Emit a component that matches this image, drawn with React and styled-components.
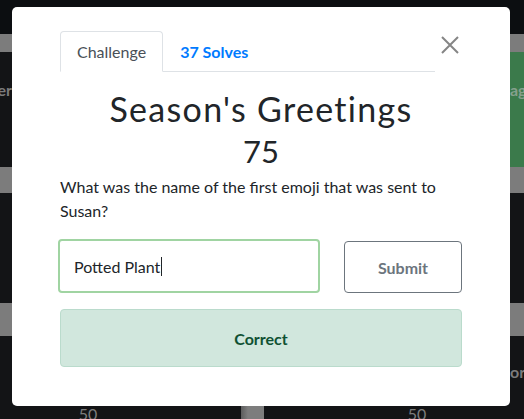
import React from 'react';
import styled, { createGlobalStyle } from 'styled-components';

const GlobalStyle = createGlobalStyle`
  html, body {
    margin: 0;
    padding: 0;
    background: #111214;
    font-family: Lato, "Open Sans", Arial, sans-serif;
    overflow: hidden;
  }
  * { box-sizing: border-box; }
`;

// background board (already dimmed by the modal backdrop)

const Board = styled.div`
  width: 524px;
  height: 419px;
  display: flex;
  flex-direction: column;
`;

const Nav = styled.div`
  height: 34px;
  background: #0c0e11;
`;

const Band = styled.div`
  height: ${p => p.h}px;
  background: #7c7c7c;
`;

const Row = styled.div`
  height: ${p => p.h}px;
  display: flex;
  background: #131416;
`;

const Strip = styled.div`
  width: ${p => p.w}px;
  overflow: hidden;
  display: flex;
  justify-content: ${p => (p.side === 'left' ? 'flex-end' : 'flex-start')};
  background: ${p => p.bg || '#131416'};
  padding-top: ${p => p.top || 0}px;
`;

const StripText = styled.span`
  font-size: 16px;
  font-weight: 700;
  color: ${p => p.color || '#7b7b7b'};
  white-space: nowrap;
  line-height: 20px;
  height: 20px;
`;

const Middle = styled.div`
  flex: 1;
  display: flex;
  align-items: flex-end;
`;

const Points = styled.div`
  width: ${p => p.w}px;
  margin-left: ${p => p.ml || 0}px;
  text-align: center;
  font-size: 16px;
  line-height: 16px;
  height: 13px;
  overflow: hidden;
  color: #7d7d7d;
`;

const GrayBar = styled.div`
  width: 23px;
  height: 13px;
  margin-left: ${p => p.ml}px;
  background: linear-gradient(to right, #5c5c5c, #7d7d7d 30%, #7d7d7d);
`;

// modal

const Modal = styled.div`
  position: fixed;
  left: 12px;
  top: 7px;
  width: 498px;
  height: 399px;
  background: #fff;
  border-radius: 5px;
  padding: 24px 48px 0 48px;
  color: #212529;
`;

const Header = styled.div`
  display: flex;
  align-items: flex-start;
`;

const Tabs = styled.div`
  flex: 1;
  display: flex;
  border-bottom: 1px solid #dee2e6;
  margin-right: 5px;
`;

const Tab = styled.div`
  height: 41px;
  padding: 0 16px;
  display: flex;
  align-items: center;
  font-size: 16px;
  margin-bottom: -1px;
  border: 1px solid ${p => (p.active ? '#dee2e6' : 'transparent')};
  border-bottom-color: ${p => (p.active ? '#fff' : 'transparent')};
  border-radius: 4px 4px 0 0;
  background: ${p => (p.active ? '#fff' : 'transparent')};
  color: ${p => (p.active ? '#495057' : '#007bff')};
  font-weight: ${p => (p.active ? 400 : 700)};
`;

const Close = styled.button`
  border: 0;
  background: none;
  padding: 0;
  margin-top: 4px;
  margin-right: 2px;
  width: 20px;
  height: 20px;
  display: flex;
  align-items: center;
  justify-content: center;
`;

const Title = styled.h2`
  margin: 17px 0 0 0;
  font-size: 34px;
  font-weight: 400;
  line-height: 40px;
  letter-spacing: 1.3px;
  text-align: center;
  color: #212529;
`;

const Value = styled.h3`
  margin: 4px 0 0 0;
  font-size: 31px;
  font-weight: 400;
  line-height: 36px;
  text-align: center;
  color: #212529;
`;

const Question = styled.p`
  margin: 6px 0 0 0;
  font-size: 16px;
  line-height: 24px;
  color: #212529;
`;

const AnswerRow = styled.div`
  display: grid;
  grid-template-columns: 1fr 118px;
  column-gap: 24px;
  align-items: end;
  margin-top: 16px;
`;

const Field = styled.div`
  height: 54px;
  margin-left: -2px;
  border: 2px solid #a0d4a2;
  border-radius: 4px;
  display: flex;
  align-items: center;
  padding: 0 14px;
  font-size: 16px;
  color: #212529;
`;

const Caret = styled.span`
  display: inline-block;
  width: 1px;
  height: 19px;
  background: #212529;
  margin-left: 1px;
`;

const SubmitButton = styled.button`
  height: 52px;
  border: 1px solid #6c757d;
  border-radius: 4px;
  background: #fff;
  color: #6c757d;
  font-family: inherit;
  font-size: 16px;
  font-weight: 700;
`;

const Alert = styled.div`
  margin-top: 16px;
  height: 58px;
  border: 1px solid #badbcc;
  border-radius: 4px;
  background: #d1e7dd;
  color: #0f5132;
  font-size: 16px;
  font-weight: 700;
  display: flex;
  align-items: center;
  justify-content: center;
`;

export default function App() {
  return (
    <>
      <GlobalStyle />
      <Board>
        <Nav />
        <Band h={18} />
        <Row h={115}>
          <Strip w={12} side="left" top={28}><StripText>Beginner</StripText></Strip>
          <Middle />
          <Strip w={14} side="right" bg="#3b7a4b" top={28}><StripText color="#86a08d">agic</StripText></Strip>
        </Row>
        <Band h={26} />
        <Row h={110} />
        <Band h={33} />
        <Row h={83}>
          <Strip w={12} side="left" />
          <Middle>
            <Points w={152}>50</Points>
            <GrayBar ml={77} />
            <Points w={60} ml={123}>50</Points>
          </Middle>
          <Strip w={14} side="right" top={26}><StripText>ore</StripText></Strip>
        </Row>
      </Board>

      <Modal>
        <Header>
          <Tabs>
            <Tab active>Challenge</Tab>
            <Tab>37 Solves</Tab>
          </Tabs>
          <Close aria-label="Close">
            <svg width="20" height="20" viewBox="0 0 20 20">
              <path d="M2 2 L18 18 M18 2 L2 18" stroke="#858585" strokeWidth="2" fill="none" />
            </svg>
          </Close>
        </Header>
        <Title>Season's Greetings</Title>
        <Value>75</Value>
        <Question>What was the name of the first emoji that was sent to Susan?</Question>
        <AnswerRow>
          <Field>Potted Plant<Caret /></Field>
          <SubmitButton>Submit</SubmitButton>
        </AnswerRow>
        <Alert>Correct</Alert>
      </Modal>
    </>
  );
}
